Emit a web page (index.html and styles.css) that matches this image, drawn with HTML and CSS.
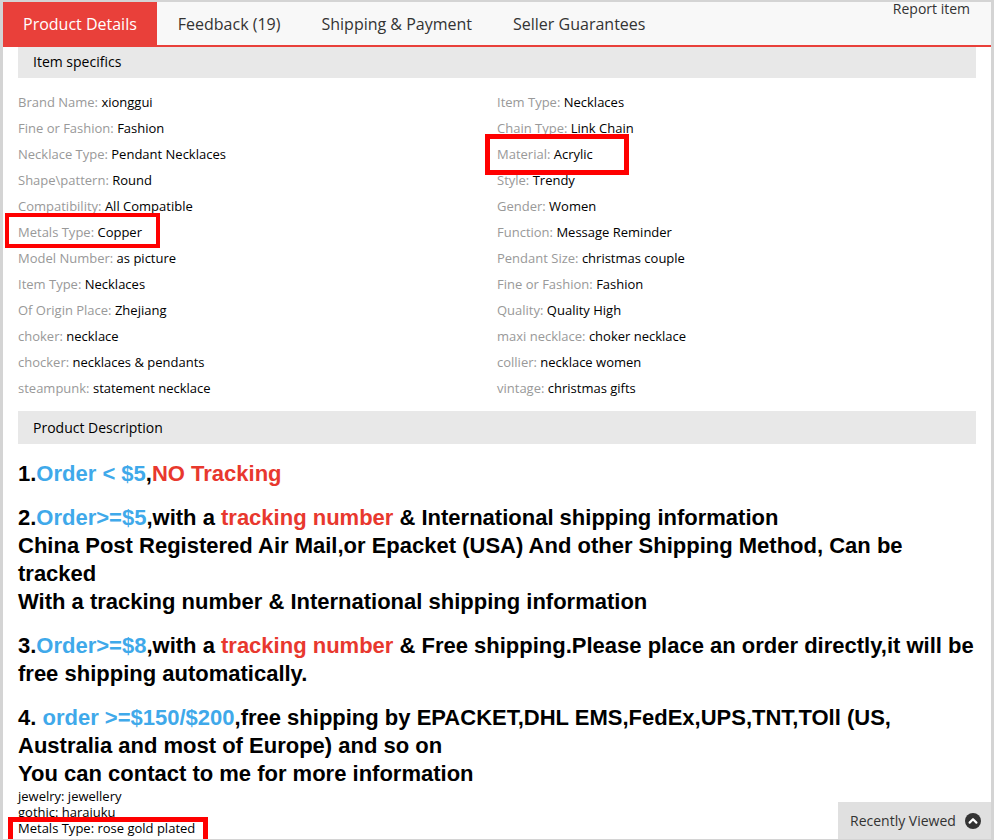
FILE: index.html
```html
<!DOCTYPE html>
<html>
<head>
<meta charset="utf-8">
<link rel="stylesheet" href="styles.css">
</head>
<body>
<div class="frame">
  <div class="tabs">
    <div class="tab active">Product Details</div>
    <div class="tab">Feedback (19)</div>
    <div class="tab">Shipping &amp; Payment</div>
    <div class="tab">Seller Guarantees</div>
    <a class="report">Report item</a>
  </div>
  <div class="content">
    <div class="section-head">Item specifics</div>
    <div class="specs">
      <div class="col">
        <div class="row"><span class="lbl">Brand Name:</span> <span class="val">xionggui</span></div>
        <div class="row"><span class="lbl">Fine or Fashion:</span> <span class="val">Fashion</span></div>
        <div class="row"><span class="lbl">Necklace Type:</span> <span class="val">Pendant Necklaces</span></div>
        <div class="row"><span class="lbl">Shape\pattern:</span> <span class="val">Round</span></div>
        <div class="row"><span class="lbl">Compatibility:</span> <span class="val">All Compatible</span></div>
        <div class="row"><span class="mark mark-a"><span class="lbl">Metals Type:</span> <span class="val">Copper</span></span></div>
        <div class="row"><span class="lbl">Model Number:</span> <span class="val">as picture</span></div>
        <div class="row"><span class="lbl">Item Type:</span> <span class="val">Necklaces</span></div>
        <div class="row"><span class="lbl">Of Origin Place:</span> <span class="val">Zhejiang</span></div>
        <div class="row"><span class="lbl">choker:</span> <span class="val">necklace</span></div>
        <div class="row"><span class="lbl">chocker:</span> <span class="val">necklaces &amp; pendants</span></div>
        <div class="row"><span class="lbl">steampunk:</span> <span class="val">statement necklace</span></div>
      </div>
      <div class="col">
        <div class="row"><span class="lbl">Item Type:</span> <span class="val">Necklaces</span></div>
        <div class="row"><span class="lbl">Chain Type:</span> <span class="val">Link Chain</span></div>
        <div class="row"><span class="mark mark-b"><span class="lbl">Material:</span> <span class="val">Acrylic</span></span></div>
        <div class="row"><span class="lbl">Style:</span> <span class="val">Trendy</span></div>
        <div class="row"><span class="lbl">Gender:</span> <span class="val">Women</span></div>
        <div class="row"><span class="lbl">Function:</span> <span class="val">Message Reminder</span></div>
        <div class="row"><span class="lbl">Pendant Size:</span> <span class="val">christmas couple</span></div>
        <div class="row"><span class="lbl">Fine or Fashion:</span> <span class="val">Fashion</span></div>
        <div class="row"><span class="lbl">Quality:</span> <span class="val">Quality High</span></div>
        <div class="row"><span class="lbl">maxi necklace:</span> <span class="val">choker necklace</span></div>
        <div class="row"><span class="lbl">collier:</span> <span class="val">necklace women</span></div>
        <div class="row"><span class="lbl">vintage:</span> <span class="val">christmas gifts</span></div>
      </div>
    </div>
    <div class="section-head desc-head">Product Description</div>
    <div class="desc">
      <p>1.<span class="blue">Order &lt; $5</span>,<span class="red">NO Tracking</span></p>
      <p>2.<span class="blue">Order&gt;=$5</span>,with a <span class="red">tracking number</span> &amp; International shipping information<br>China Post Registered Air Mail,or Epacket (USA) And other Shipping Method, Can be tracked<br>With a tracking number &amp; International shipping information</p>
      <p>3.<span class="blue">Order&gt;=$8</span>,with a <span class="red">tracking number</span> &amp; Free shipping.Please place an order directly,it will be free shipping automatically.</p>
      <p>4. <span class="blue">order &gt;=$150/$200</span>,free shipping by EPACKET,DHL EMS,FedEx,UPS,TNT,TOll (US, Australia and most of Europe) and so on<br>You can contact to me for more information</p>
    </div>
    <div class="attrs">
      <div>jewelry: jewellery</div>
      <div>gothic: harajuku</div>
      <div><span class="mark mark-c">Metals Type: rose gold plated</span></div>
    </div>
  </div>
  <div class="recent">Recently Viewed <span class="up"><svg width="16" height="16" viewBox="0 0 16 16"><circle cx="8" cy="8" r="8" fill="#333"/><path d="M4.6 9.6 L8 6.2 L11.4 9.6" fill="none" stroke="#fff" stroke-width="2.2" stroke-linecap="round" stroke-linejoin="round"/></svg></span></div>
</div>
</body>
</html>
```

FILE: styles.css
```css
html, body {
  margin: 0;
  padding: 0;
}
body {
  width: 994px;
  height: 840px;
  overflow: hidden;
  background: #d4d4d4;
  font-family: "Open Sans", "Liberation Sans", sans-serif;
}
.frame {
  position: relative;
  box-sizing: border-box;
  height: 837px;
  margin: 2px 3px 0 3px;
  background: #fff;
  overflow: hidden;
}
.tabs {
  display: flex;
  align-items: stretch;
  height: 43px;
  background: #f8f8f8;
  border-bottom: 2px solid #e9403a;
  position: relative;
}
.tab {
  padding: 1px 20.5px 0 20.5px;
  font-size: 16px;
  color: #333;
  display: flex;
  align-items: center;
}
.tab.active {
  background: #e9403a;
  color: #fff;
  padding-left: 20px;
}
.report {
  position: absolute;
  right: 21px;
  top: -1px;
  font-size: 14px;
  line-height: 16px;
  color: #333;
}
.content {
  padding: 0 15px;
}
.section-head {
  background: #e8e8e8;
  height: 31px;
  line-height: 30px;
  padding-left: 15px;
  font-size: 14px;
  color: #000;
}
.specs {
  display: grid;
  grid-template-columns: 1fr 1fr;
  padding-top: 11px;
}
.row {
  height: 26px;
  line-height: 26px;
  font-size: 13px;
}
.lbl {
  color: #999;
}
.val {
  color: #000;
}
.mark {
  position: relative;
}
.mark::after {
  content: "";
  position: absolute;
  border: 4px solid #f00;
}
.mark-a::after {
  left: -13px;
  right: -18px;
  top: -10px;
  bottom: -7px;
}
.mark-b::after {
  left: -12px;
  right: -36px;
  top: -11px;
  bottom: -12px;
  border-width: 5px;
}
.mark-c::after {
  left: -10px;
  right: -13px;
  top: -2px;
  bottom: -12px;
  border-width: 5px;
}
.desc-head {
  margin-top: 10px;
  height: 33px;
  line-height: 33px;
}
.desc {
  padding-top: 16px;
  font-family: "Liberation Sans", Arial, sans-serif;
  font-weight: bold;
  font-size: 22px;
  line-height: 28px;
  color: #000;
}
.desc p {
  margin: 0 0 16px 0;
}
.desc p:last-child {
  margin-bottom: 0;
}
.blue {
  color: #3fa9ea;
}
.red {
  color: #e8382e;
}
.attrs {
  font-size: 13px;
  line-height: 16px;
  color: #000;
}
.recent {
  position: absolute;
  right: 0;
  bottom: 0;
  width: 141px;
  height: 37px;
  background: #e0e0e0;
  padding-left: 12px;
  font-size: 14px;
  color: #333;
  display: flex;
  align-items: center;
  gap: 9px;
}
.up {
  display: flex;
}
```
